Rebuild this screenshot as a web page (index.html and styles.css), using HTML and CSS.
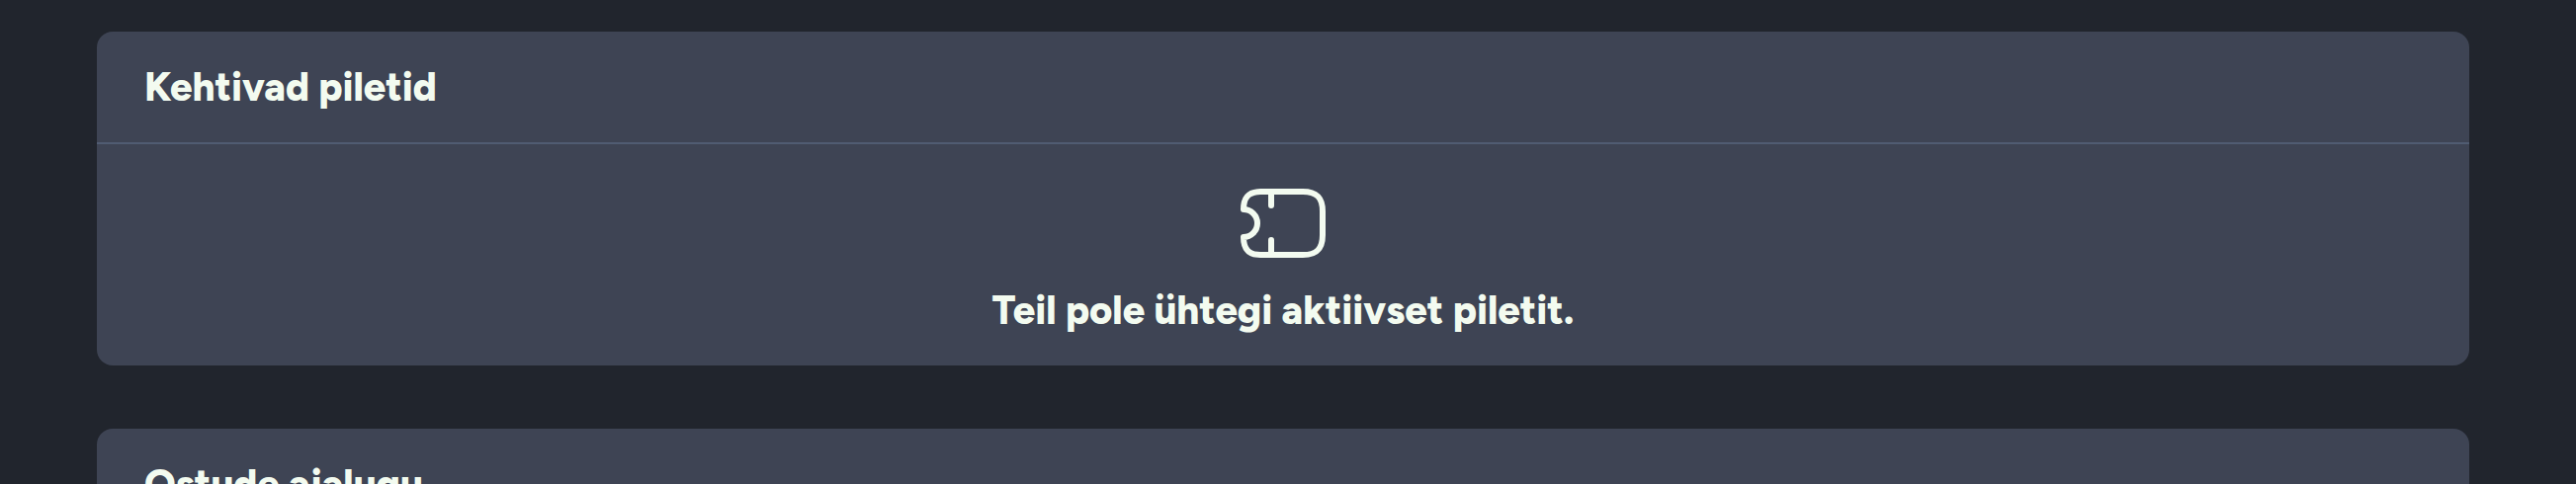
FILE: index.html
```html
<!DOCTYPE html>
<html lang="et">
<head>
<meta charset="utf-8">
<title>Piletid</title>
<link rel="stylesheet" href="styles.css">
</head>
<body>
<main class="page">
  <section class="card">
    <header class="card-header"><h2 class="title">Kehtivad piletid</h2></header>
    <div class="empty">
      <svg class="ticket" viewBox="0 0 96 96" aria-hidden="true">
        <path d="M8 34C8 22 13 16 25 16H68C82 16 88 22 88 36V60C88 74 82 80 68 80H25C13 80 8 74 8 62A14 14 0 0 0 8 34Z"/>
        <path d="M36 16V30M36 65V80"/>
      </svg>
      <p class="message">Teil pole ühtegi aktiivset piletit.</p>
    </div>
  </section>
  <section class="card">
    <header class="card-header"><h2 class="title">Ostude ajalugu</h2></header>
  </section>
</main>
</body>
</html>
```
FILE: styles.css
```css
body {
  margin: 0;
  height: 100vh;
  overflow: hidden;
  background: #21252d;
  color: #f3fbf0;
  font-family: Figtree, Lato, sans-serif;
  font-size: 40px;
  line-height: 48px;
}

.page {
  display: flex;
  flex-direction: column;
  gap: 64px;
  padding: 32px 108px 32px 98px;
}

.card {
  background: #3e4454;
  border-radius: 16px;
}

.card-header {
  padding: 32px 48px;
  border-bottom: 2px solid #505c72;
}

.title,
.message {
  margin: 0;
  font-size: 40px;
  font-weight: 800;
}

.empty {
  display: flex;
  flex-direction: column;
  align-items: center;
  gap: 16px;
  padding: 32px 48px;
}

.ticket {
  width: 96px;
  height: 96px;
  fill: none;
  stroke: currentColor;
  stroke-width: 6;
  stroke-linecap: round;
  stroke-linejoin: round;
}
```
